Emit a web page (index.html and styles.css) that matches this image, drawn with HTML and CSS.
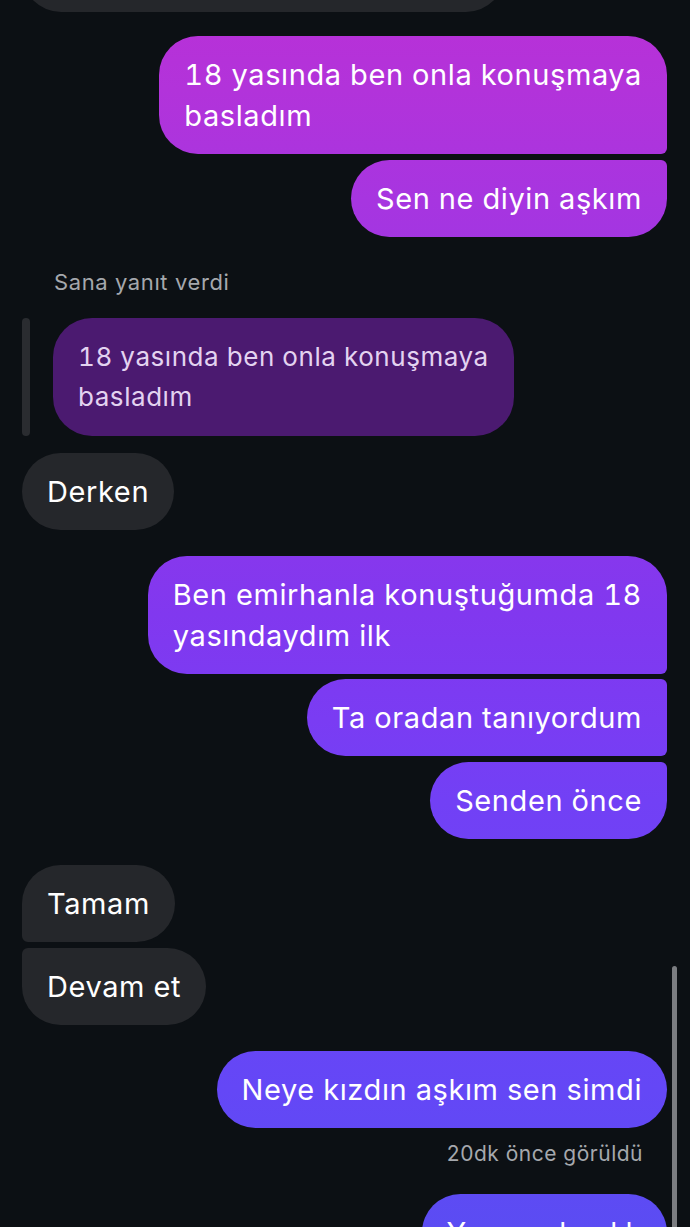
FILE: index.html
```html
<!DOCTYPE html>
<html lang="tr">
<head>
    <meta charset="UTF-8">
    <meta name="viewport" content="width=device-width, initial-scale=1.0">
    <title>Mesajlar</title>
    <link rel="stylesheet" href="styles.css">
</head>
<body>

<div class="thread">
    <div class="bubble in top-cut">Biz de öyle tanıştık zaten<br>sonra ne oldu</div>

    <div class="bubble out first">18 yasında ben onla konuşmaya<br>basladım</div>
    <div class="bubble out last gap-s">Sen ne diyin aşkım</div>

    <div class="reply-label">Sana yanıt verdi</div>
    <div class="reply">
        <div class="reply-bar"></div>
        <div class="reply-quote">18 yasında ben onla konuşmaya<br>basladım</div>
    </div>
    <div class="bubble in after-reply">Derken</div>

    <div class="bubble out first gap-l">Ben emirhanla konuştuğumda 18<br>yasındaydım ilk</div>
    <div class="bubble out middle gap-xs">Ta oradan tanıyordum</div>
    <div class="bubble out last gap-s">Senden önce</div>

    <div class="bubble in first gap-l">Tamam</div>
    <div class="bubble in last gap-s">Devam et</div>

    <div class="bubble out gap-l">Neye kızdın aşkım sen simdi</div>
    <div class="seen">20dk önce görüldü</div>
    <div class="bubble out gap-xl">Yo ama kızdık</div>
</div>

<div class="scrollbar"></div>

</body>
</html>
```

FILE: styles.css
```css
body {
    margin: 0;
    background-color: #0c1014;
    font-family: Inter, "Liberation Sans", sans-serif;
    color: #fff;
    height: 100vh;
    overflow: hidden;
}

.thread {
    display: flex;
    flex-direction: column;
    padding: 0 23px 0 22px;
    margin-top: -106px;
}

.bubble {
    font-size: 29px;
    line-height: 41px;
    letter-spacing: 0.6px;
    font-variant-numeric: tabular-nums;
    padding: 18px 25px;
    border-radius: 39px;
    white-space: nowrap;
}

.bubble.in {
    align-self: flex-start;
    background-color: #25272b;
}

.bubble.out {
    align-self: flex-end;
    margin-top: 24px;
    background-image: linear-gradient(to bottom,
        #b930d7 0px,
        #b233da 90px,
        #a735e0 200px,
        #8138ef 615px,
        #7a3cf3 720px,
        #7240f5 800px,
        #6447f6 1090px,
        #5b4cf3 1227px);
    background-attachment: fixed;
}

/* corners inside a group */
.bubble.out.first { border-bottom-right-radius: 6px; }
.bubble.out.middle { border-top-right-radius: 6px; border-bottom-right-radius: 6px; }
.bubble.out.last { border-top-right-radius: 6px; }
.bubble.in.first { border-bottom-left-radius: 6px; }
.bubble.in.last { border-top-left-radius: 6px; }

.bubble.out.gap-xs, .bubble.in.gap-xs { margin-top: 5px; }
.bubble.out.gap-s, .bubble.in.gap-s { margin-top: 6px; }
.bubble.out.gap-l, .bubble.in.gap-l { margin-top: 26px; }
.bubble.out.gap-xl { margin-top: 27px; }

.top-cut {
    width: 433px;
}

.reply-label {
    margin: 32px 0 0 32px;
    font-size: 22px;
    line-height: 27px;
    letter-spacing: 0.6px;
    color: #a5a8ad;
}

.reply {
    display: flex;
    gap: 23px;
    margin-top: 22px;
}

.reply-bar {
    width: 8px;
    border-radius: 4px;
    background-color: #2a2c30;
}

.reply-quote {
    background-color: #4b1a70;
    color: #e3d3f0;
    font-size: 26px;
    line-height: 40px;
    letter-spacing: 0.55px;
    font-variant-numeric: tabular-nums;
    padding: 19px 25px;
    border-radius: 39px;
    white-space: nowrap;
}

.after-reply {
    margin-top: 17px;
}

.seen {
    align-self: flex-end;
    margin: 13px 24px 0 0;
    font-size: 21px;
    line-height: 26px;
    letter-spacing: 0.5px;
    color: #a5a8ad;
}

.scrollbar {
    position: absolute;
    left: 672px;
    top: 966px;
    width: 5px;
    height: 280px;
    border-radius: 3px;
    background-color: #7b7d81;
}
```
